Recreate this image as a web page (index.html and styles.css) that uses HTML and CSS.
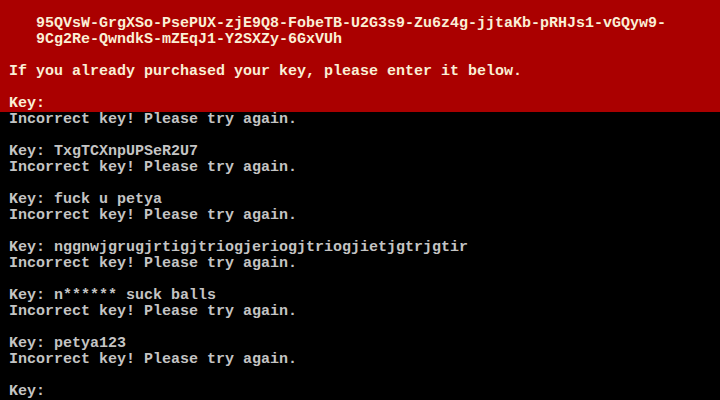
FILE: index.html
```html
<!DOCTYPE html>
<html>
<head>
<meta charset="utf-8">
<link rel="stylesheet" href="styles.css">
</head>
<body>
<div class="screen">
<pre class="panel red">

   95QVsW-GrgXSo-PsePUX-zjE9Q8-FobeTB-U2G3s9-Zu6z4g-jjtaKb-pRHJs1-vGQyw9-
   9Cg2Re-QwndkS-mZEqJ1-Y2SXZy-6GxVUh

If you already purchased your key, please enter it below.

Key:</pre>
<pre class="panel black">Incorrect key! Please try again.

Key: TxgTCXnpUPSeR2U7
Incorrect key! Please try again.

Key: fuck u petya
Incorrect key! Please try again.

Key: nggnwjgrugjrtigjtriogjeriogjtriogjietjgtrjgtir
Incorrect key! Please try again.

Key: n****** suck balls
Incorrect key! Please try again.

Key: petya123
Incorrect key! Please try again.

Key:</pre>
</div>
</body>
</html>
```
FILE: styles.css
```css
html, body {
  margin: 0;
  padding: 0;
  background: #000;
}
.screen {
  width: 720px;
  height: 400px;
  overflow: hidden;
  display: flex;
  flex-direction: column;
}
.panel {
  margin: 0;
  padding: 0 0 0 9px;
  font-family: "Liberation Mono", "DejaVu Sans Mono", monospace;
  font-size: 15px;
  font-weight: bold;
  line-height: 16px;
  white-space: pre;
}
.red {
  background: #aa0000;
  color: #fbefd6;
  height: 112px;
  flex: none;
}
.black {
  background: #000;
  color: #c4c4c4;
  flex: 1;
}
```
